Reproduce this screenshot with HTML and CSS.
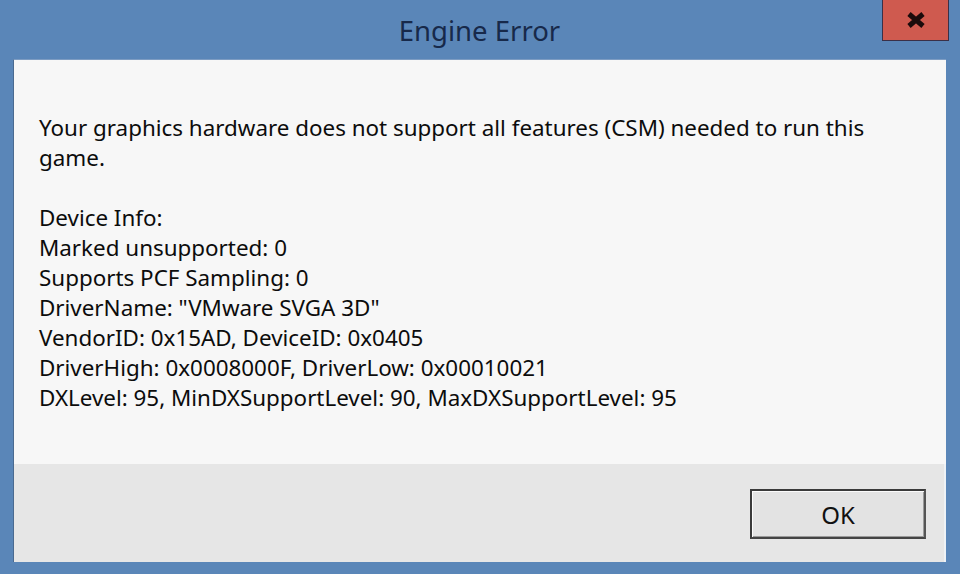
FILE: index.html
```html
<!DOCTYPE html>
<html>
<head>
<meta charset="utf-8">
<link rel="stylesheet" href="styles.css">
</head>
<body>
<div class="window">
  <div class="titlebar">
    <span class="title">Engine Error</span>
    <div class="close"><svg width="20" height="16" viewBox="0 0 20 16"><path d="M3 2 L17 14 M17 2 L3 14" stroke="#1b0b0b" stroke-width="5" stroke-linecap="butt"/></svg></div>
  </div>
  <div class="client">
    <div class="content">
      <p class="msg">Your graphics hardware does not support all features (CSM) needed to run this<br>game.</p>
      <p class="info">Device Info:<br>Marked unsupported: 0<br>Supports PCF Sampling: 0<br>DriverName: "VMware SVGA 3D"<br>VendorID: 0x15AD, DeviceID: 0x0405<br>DriverHigh: 0x0008000F, DriverLow: 0x00010021<br>DXLevel: 95, MinDXSupportLevel: 90, MaxDXSupportLevel: 95</p>
    </div>
    <div class="footer">
      <button class="ok">OK</button>
    </div>
  </div>
</div>
</body>
</html>
```
FILE: styles.css
```css
html, body {
  margin: 0;
  padding: 0;
  width: 960px;
  height: 574px;
  overflow: hidden;
  background: #5a86b8;
}
.window {
  position: relative;
  display: flex;
  flex-direction: column;
  height: 574px;
  font-family: "Noto Sans", "Open Sans", sans-serif;
}
.titlebar {
  height: 59px;
  display: flex;
  align-items: center;
  justify-content: center;
  flex: none;
}
.title {
  font-size: 27.5px;
  color: #17294a;
  margin-top: 1px;
  margin-left: -1px;
}
.close {
  position: absolute;
  top: 0;
  left: 882px;
  width: 65px;
  height: 40px;
  background: #cf5a4f;
  border: 1px solid #3a3048;
  border-top: none;
  display: flex;
  align-items: center;
  justify-content: center;
}
.close svg {
  margin-top: -1px;
}
.client {
  flex: 1;
  margin: 0 14px 12px 13px;
  display: flex;
  flex-direction: column;
  border-left: 1px solid #4a6a90;
  border-top: 1px solid #7d9cc2;
}
.content {
  background: #f7f7f7;
  height: 404px;
  padding: 0 0 0 25px;
  box-sizing: border-box;
  color: #0c0c0c;
  font-size: 22.4px;
  line-height: 30px;
}
.msg {
  margin: 53px 0 0 0;
}
.info {
  margin: 30px 0 0 0;
}
.footer {
  flex: 1;
  background: #e6e6e6;
  display: flex;
  justify-content: flex-end;
  align-items: flex-start;
  padding: 25px 18px 0 0;
  border-right: 2px solid #eef2f6;
}
.ok {
  width: 176px;
  height: 50px;
  background: #e3e3e3;
  border: 2px solid #3a3a3a;
  border-right-color: #555;
  border-bottom-color: #444;
  box-shadow: inset 1px 1px 0 #fbfbfb, inset -1px -1px 0 #9a9a9a;
  font-family: "Noto Sans", "Open Sans", sans-serif;
  font-size: 24px;
  color: #111;
  padding: 0;
}
```
